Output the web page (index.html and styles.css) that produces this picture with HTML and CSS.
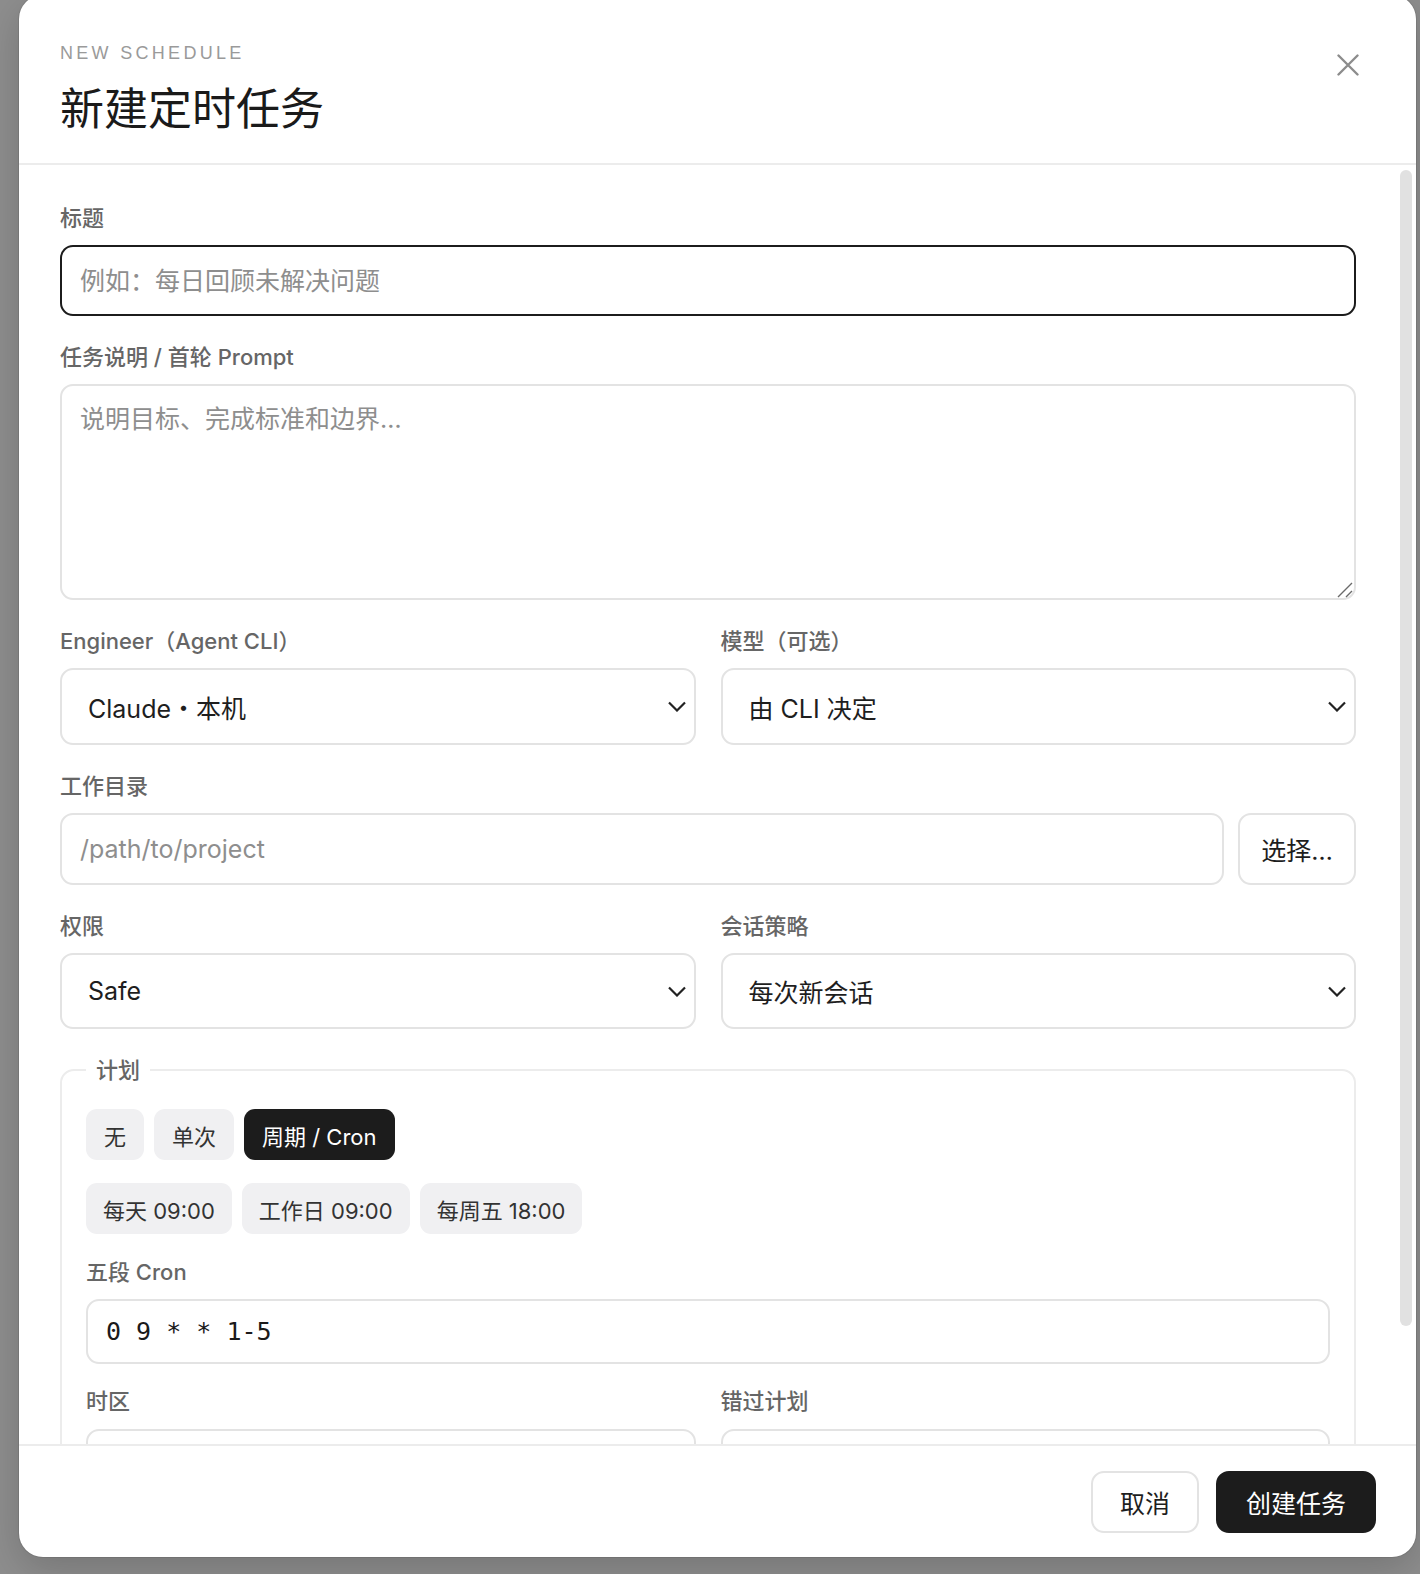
FILE: index.html
```html
<!DOCTYPE html>
<html>
<head>
<meta charset="utf-8">
<title>新建定时任务</title>
<link rel="stylesheet" href="styles.css">
</head>
<body>
<div class="dialog">
<div class="head">
<div>
<div class="eyebrow">NEW SCHEDULE</div>
<h1 class="title">新建定时任务</h1>
</div>
<button class="close" aria-label="关闭"><svg width="22" height="22" viewBox="0 0 22 22"><path d="M1.5 1.5L20.5 20.5M20.5 1.5L1.5 20.5" stroke="#8c8c8c" stroke-width="2.4" stroke-linecap="round"/></svg></button>
</div>
<div class="body">
<div class="scroll">
<div class="field">
<label>标题</label>
<input class="input focus" type="text" placeholder="例如：每日回顾未解决问题">
</div>
<div class="field">
<label>任务说明 / 首轮 Prompt</label>
<div class="area-wrap">
<textarea class="input area" placeholder="说明目标、完成标准和边界…"></textarea>
<svg class="grip" width="18" height="18" viewBox="0 0 18 18"><path d="M2 16L16 2M10 16L16 10" stroke="#6a6a6a" stroke-width="1.4"/></svg>
</div>
</div>
<div class="field row2">
<div>
<label>Engineer（Agent CLI）</label>
<div class="select"><span>Claude<span class="dot">·</span>本机</span><svg width="18" height="11" viewBox="0 0 18 11"><path d="M1 1.5L9 9.5L17 1.5" fill="none" stroke="#222" stroke-width="2.2"/></svg></div>
</div>
<div>
<label>模型（可选）</label>
<div class="select"><span>由 CLI 决定</span><svg width="18" height="11" viewBox="0 0 18 11"><path d="M1 1.5L9 9.5L17 1.5" fill="none" stroke="#222" stroke-width="2.2"/></svg></div>
</div>
</div>
<div class="field">
<label>工作目录</label>
<div class="path">
<input class="input" type="text" placeholder="/path/to/project">
<button class="pick">选择…</button>
</div>
</div>
<div class="field row2">
<div>
<label>权限</label>
<div class="select short"><span>Safe</span><svg width="18" height="11" viewBox="0 0 18 11"><path d="M1 1.5L9 9.5L17 1.5" fill="none" stroke="#222" stroke-width="2.2"/></svg></div>
</div>
<div>
<label>会话策略</label>
<div class="select short"><span>每次新会话</span><svg width="18" height="11" viewBox="0 0 18 11"><path d="M1 1.5L9 9.5L17 1.5" fill="none" stroke="#222" stroke-width="2.2"/></svg></div>
</div>
</div>
<fieldset class="plan">
<legend>计划</legend>
<div class="seg">
<button>无</button>
<button>单次</button>
<button class="on">周期 / Cron</button>
</div>
<div class="seg presets">
<button>每天 09:00</button>
<button>工作日 09:00</button>
<button>每周五 18:00</button>
</div>
<div class="inner cron-row">
<label>五段 Cron</label>
<input class="input cron" type="text" value="0 9 * * 1-5">
</div>
<div class="inner row2">
<div>
<label>时区</label>
<div class="select short"></div>
</div>
<div>
<label>错过计划</label>
<div class="select short"></div>
</div>
</div>
</fieldset>
</div>
<div class="track"><div class="thumb"></div></div>
</div>
<div class="foot">
<button class="btn">取消</button>
<button class="btn primary">创建任务</button>
</div>
</div>
</body>
</html>
```
FILE: styles.css
```css
body{margin:0;height:1574px;overflow:hidden;background:#8e8e8e;font-family:"Inter","Noto Sans CJK SC",sans-serif;color:#1e1e1e}
button{font-family:inherit;cursor:pointer}
.dialog{margin:-5px 0 0 19px;width:1397px;height:1562px;background:#fff;border-radius:24px;display:flex;flex-direction:column;overflow:hidden;box-shadow:0 0 0 1px rgba(0,0,0,.08),0 12px 40px rgba(0,0,0,.18)}
.head{flex-shrink:0;box-sizing:border-box;height:170px;padding:47px 46px 0 41px;display:flex;justify-content:space-between;align-items:flex-start;border-bottom:2px solid #ececec}
.eyebrow{font-family:"Liberation Sans",sans-serif;font-size:18px;line-height:22px;letter-spacing:3.3px;color:#9a9a9a}
.title{margin:14px 0 0;font-size:44px;line-height:56px;font-weight:400;color:#1a1a1a;font-family:"Noto Sans CJK SC",serif}
.close{margin-top:1px;width:44px;height:44px;border:0;background:none;padding:0;display:flex;align-items:center;justify-content:center}
.body{flex:1;min-height:0;display:flex}
.scroll{flex:1;min-width:0;overflow:hidden;padding:38px 44px 38px 41px}
.track{flex-shrink:0;width:16px}
.thumb{margin-top:5px;width:12px;height:1156px;border-radius:6px;background:#e1e1e1}
.field{margin-bottom:26px}
label{display:block;font-size:22px;line-height:30px;font-weight:500;color:#666;margin-bottom:12px}
.input{display:block;width:100%;box-sizing:border-box;height:72px;border:2px solid #e3e3e3;border-radius:13px;padding:0 18px;font-size:25px;font-family:inherit;color:#1e1e1e;background:#fff;outline:none}
.input::placeholder{color:#8e8e8e}
.input.focus{border-color:#1c1c1c;height:71px}
.area-wrap{position:relative}
.area{height:216px;padding:15px 18px;line-height:36px;resize:none}
.grip{position:absolute;right:2px;bottom:1px}
.row2{display:grid;grid-template-columns:1fr 1fr;gap:25px}
.select{box-sizing:border-box;height:77px;border:2px solid #e3e3e3;border-radius:13px;padding:0 8px 0 26px;display:flex;align-items:center;justify-content:space-between;font-size:25px;color:#1e1e1e}
.select.short{height:76px}
.dot{font-family:"Noto Sans CJK SC",sans-serif}
.path{display:flex;gap:14px}
.path .input{flex:1}
.pick{flex-shrink:0;width:118px;height:72px;border:2px solid #e3e3e3;border-radius:13px;background:#fff;font-size:25px;color:#1e1e1e;padding:0}
.plan{margin:0;border:2px solid #ececec;border-radius:14px;padding:0 24px 24px;min-width:0}
.plan legend{padding:0 10px;font-size:22px;line-height:30px;font-weight:500;color:#666}
.seg{display:flex;gap:10px;margin-top:24px}
.seg button{height:51px;padding:0 18px;border:0;border-radius:11px;background:#f0f0f2;font-size:22px;color:#333}
.seg button.on{background:#1c1c1c;color:#fff}
.presets{margin-top:23px}
.presets button{padding:0 17px}
.inner{margin-top:22px}
.cron-row{margin-top:23px}
.inner label{margin-bottom:13px}
.cron-row label{margin-bottom:12px}
.cron{height:65px;font-family:"DejaVu Sans Mono",monospace;font-size:25px;color:#1a1a1a}
.foot{flex-shrink:0;box-sizing:border-box;height:113px;border-top:2px solid #ececec;padding:0 40px;display:flex;justify-content:flex-end;align-items:center;gap:17px}
.btn{height:62px;padding:0 27px;border:2px solid #e3e3e3;border-radius:13px;background:#fff;font-size:25px;color:#1e1e1e}
.btn.primary{background:#1c1c1c;border-color:#1c1c1c;color:#fff;padding:0 28px}
```
